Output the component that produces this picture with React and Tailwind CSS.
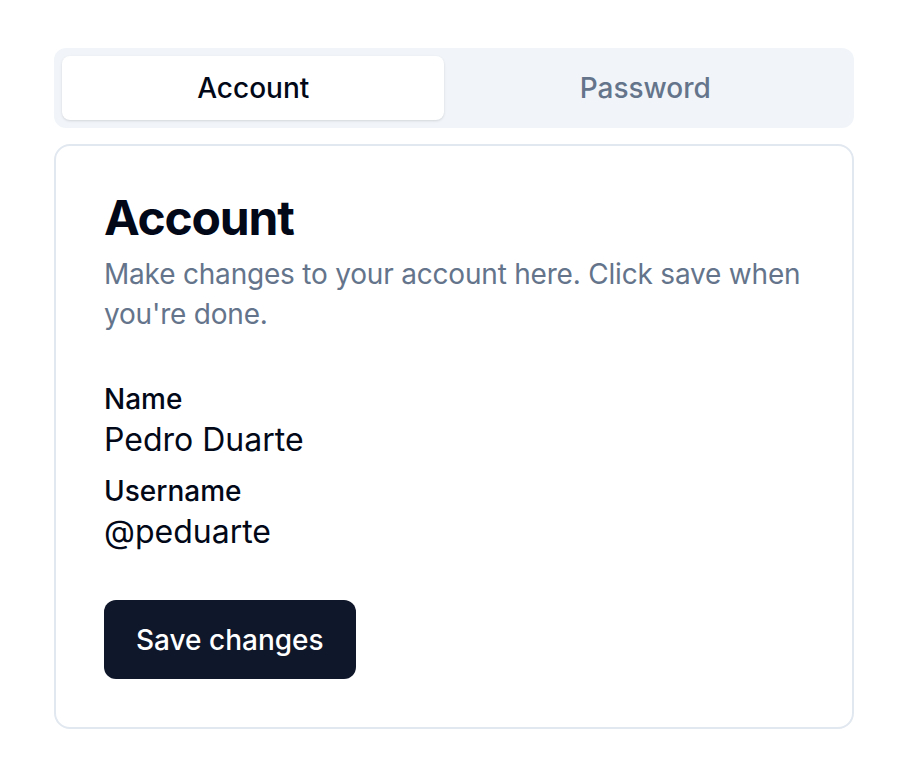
import { useState } from 'react';

const TABS = [
  { key: 'account', label: 'Account' },
  { key: 'password', label: 'Password' },
];

function Field({ label, value }) {
  return (
    <div className="flex flex-col">
      <span className="text-[28px] leading-[28px] font-medium text-[#020817]">{label}</span>
      <span className="mt-[3px] text-[32px] leading-[48px] text-[#020817]">{value}</span>
    </div>
  );
}

export default function App() {
  const [tab, setTab] = useState('account');

  return (
    <div className="min-h-screen bg-white pt-[48px] pl-[54px] font-['Inter',sans-serif]">
      <div className="w-[800px]">
        {/* tab list */}
        <div className="flex h-[80px] p-[8px] rounded-[12px] bg-[#f1f5f9]">
          {TABS.map((t) => (
            <button
              key={t.key}
              onClick={() => setTab(t.key)}
              className={
                tab === t.key
                  ? 'grow px-[24px] rounded-[8px] bg-white text-[28px] leading-[40px] font-medium text-[#020817] shadow-sm'
                  : 'grow px-[24px] rounded-[8px] text-[28px] leading-[40px] font-medium text-[#64748b]'
              }
            >
              {t.label}
            </button>
          ))}
        </div>

        {/* card */}
        <div className="mt-[16px] border-2 border-[#e2e8f0] rounded-[16px] bg-white">
          <div className="px-[48px] pt-[48px] pb-[51px]">
            <h3 className="text-[48px] leading-[48px] font-bold tracking-tight text-[#020817]">Account</h3>
            <p className="mt-[12px] text-[28px] leading-[40px] tracking-[-0.2px] text-[#64748b]">
              Make changes to your account here. Click save when you're done.
            </p>
          </div>
          <div className="px-[48px] flex flex-col gap-[13px]">
            <Field label="Name" value="Pedro Duarte" />
            <Field label="Username" value="@peduarte" />
          </div>
          <div className="px-[48px] pt-[44px] pb-[48px]">
            <button className="h-[79px] px-[32px] rounded-[12px] bg-[#0f172a] text-white text-[28px] font-medium">
              Save changes
            </button>
          </div>
        </div>
      </div>
    </div>
  );
}
